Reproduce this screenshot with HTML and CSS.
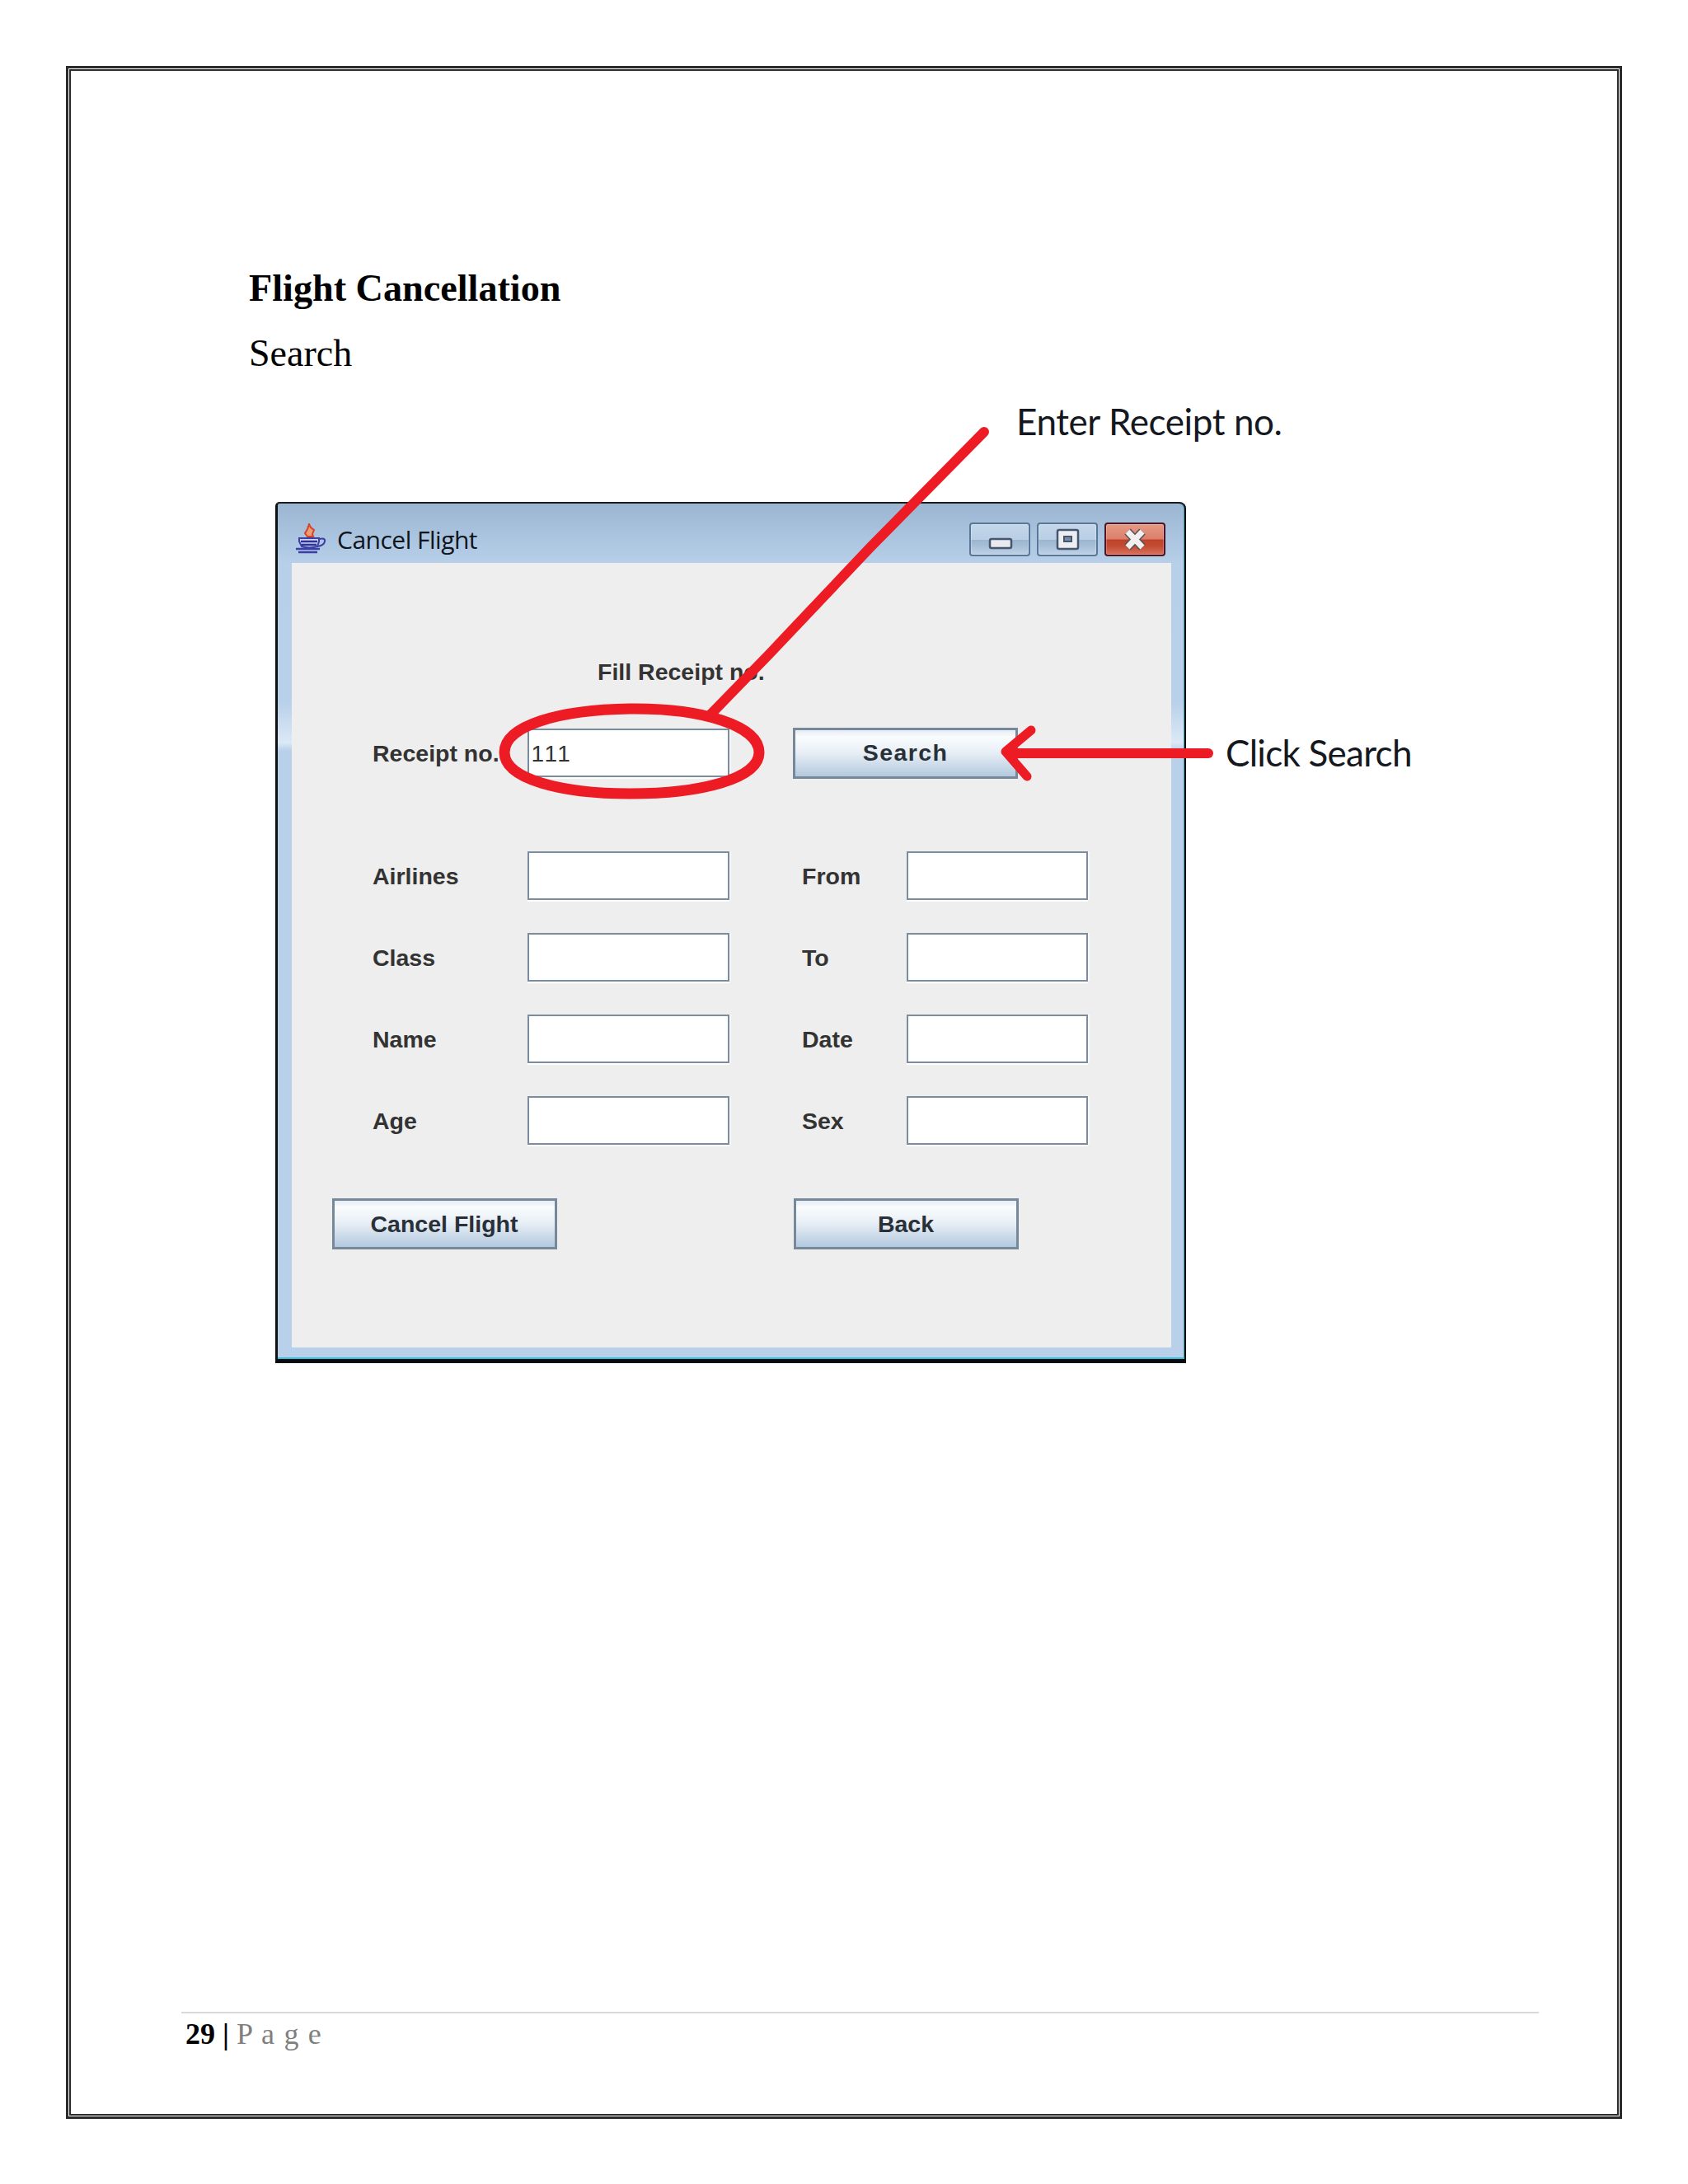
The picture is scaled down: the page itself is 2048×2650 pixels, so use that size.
FILE: index.html
```html
<!DOCTYPE html>
<html lang="en">
<head>
<meta charset="utf-8">
<title>Flight Cancellation</title>
<link rel="stylesheet" href="styles.css">
</head>
<body>
<div class="sheet">
  <main class="frame">
    <h1 class="title">Flight Cancellation</h1>
    <p class="subtitle">Search</p>
    <section class="window">
      <header class="titlebar">
        <svg class="java-icon" viewBox="0 0 38 37" aria-hidden="true">
          <path d="M17 1 L19 5 L23 8 L21 13 L22 16 L15 16 L12 12 L15 7 Z" fill="#e8a070" stroke="#d8412c" stroke-width="2"/>
          <path d="M5 18 H29 V22 L27 28 Q17 31 8 28 L5 22 Z" fill="#cfd6ee" stroke="#3b3fa6" stroke-width="2"/>
          <path d="M7 22 H27 M8 26 H26" stroke="#2e3296" stroke-width="2.5"/>
          <path d="M29 19 Q37 17 36 22 Q35 27 27 28" fill="none" stroke="#3b3fa6" stroke-width="2"/>
          <path d="M1 31 H30 M4 35 H27" stroke="#3b3fa6" stroke-width="2.5"/>
        </svg>
        <span class="window-title">Cancel Flight</span>
        <div class="controls">
          <div class="ctrl">
            <svg viewBox="0 0 74 41" aria-hidden="true"><rect x="25" y="20" width="26" height="11" rx="2" fill="#e9e9f0" stroke="#45566e" stroke-width="2.5"/></svg>
          </div>
          <div class="ctrl">
            <svg viewBox="0 0 74 41" aria-hidden="true"><rect x="25" y="9" width="25" height="23" rx="2" fill="#eceef2" stroke="#45566e" stroke-width="2.5"/><rect x="33" y="17" width="9" height="6" fill="#7b8ba6" stroke="#45566e" stroke-width="2"/></svg>
          </div>
          <div class="ctrl ctrl-close">
            <svg viewBox="0 0 74 41" aria-hidden="true"><path d="M28 11 L46 30 M46 11 L28 30" stroke="#54505a" stroke-width="10"/><path d="M28 11 L46 30 M46 11 L28 30" stroke="#f2f0ee" stroke-width="7"/></svg>
          </div>
        </div>
      </header>
      <div class="panel">
        <div class="fill-label jlabel">Fill Receipt no.</div>
        <div class="receipt-row">
          <label class="jlabel receipt-label">Receipt no.</label>
          <input class="jfield" type="text" value="111" readonly>
          <button class="jbutton search-btn" type="button">Search</button>
        </div>
        <div class="form-grid">
          <label class="jlabel">Airlines</label><input class="jfield" type="text" readonly>
          <label class="jlabel right-label">From</label><input class="jfield" type="text" readonly>
          <label class="jlabel">Class</label><input class="jfield" type="text" readonly>
          <label class="jlabel right-label">To</label><input class="jfield" type="text" readonly>
          <label class="jlabel">Name</label><input class="jfield" type="text" readonly>
          <label class="jlabel right-label">Date</label><input class="jfield" type="text" readonly>
          <label class="jlabel">Age</label><input class="jfield" type="text" readonly>
          <label class="jlabel right-label">Sex</label><input class="jfield" type="text" readonly>
        </div>
        <div class="actions">
          <button class="jbutton" type="button">Cancel Flight</button>
          <button class="jbutton" type="button">Back</button>
        </div>
      </div>
    </section>
    <footer class="page-footer">
      <b class="page-num">29</b> <b class="page-sep">|</b> <span class="page-word">P a g e</span>
    </footer>
  </main>

  <svg class="marks" viewBox="0 0 2048 2650" aria-hidden="true">
    <path d="M1194 524 L1056 664 L933 794 L862 867" class="mark mark-thin"/>
    <path d="M612 913 C612 880 680 861 765 860 C850 859 921 880 921 913 C921 945 850 963 765 963 C680 963 612 945 612 913 Z" class="mark mark-ring"/>
    <path d="M1466 914 H1225" class="mark mark-shaft"/>
    <path d="M1251 886 L1220 912 L1246 942" class="mark mark-head"/>
  </svg>
  <span class="callout callout-enter">Enter Receipt no.</span>
  <span class="callout callout-click">Click Search</span>
</div>
</body>
</html>
```
FILE: styles.css
```css
* { box-sizing: border-box; }
html, body { margin: 0; padding: 0; background: #fff; }
.sheet { position: relative; width: 2048px; height: 2650px; padding: 80px 80px 79px; }
.frame {
  display: flex; flex-direction: column; height: 100%;
  border: 3px solid #2b2b2b;
  box-shadow: inset 0 0 0 1px #fff, inset 0 0 0 3px #2b2b2b;
  padding: 240px 0 0 219px;
  font-family: "Liberation Serif", serif; color: #000;
}
.title { margin: 0; font-size: 46.2px; line-height: 54px; font-weight: 700; }
.subtitle { margin: 25px 0 0; font-size: 46px; line-height: 54px; font-weight: 400; }

.window {
  display: flex; flex-direction: column;
  width: 1105px; height: 1045px; margin: 153px 0 0 32px;
  padding: 0 17px 14px 17px;
  border-style: solid; border-color: #1c1c1c #0a0a0a #0a0a0a #111;
  border-width: 2px 2px 5px 3px;
  border-top-left-radius: 5px; border-top-right-radius: 8px;
  box-shadow: inset 0 -2px 0 #33c0e0, inset -1px 0 0 #3a9fc4;
  background: linear-gradient(#9bb6d2 0, #b7cfe9 72px, #b8d0e9 240px, #dce9f6 290px, #b8d0e9 300px);
}
.titlebar { display: flex; align-items: center; height: 72px; flex: none; margin-left: -11px; padding-top: 13px; }
.java-icon { width: 38px; height: 37px; flex: none; margin-left: 15px; }
.window-title {
  margin: 3px 0 0 13px; font-family: "Open Sans", sans-serif; font-size: 30px;
  letter-spacing: -0.5px; color: #10141c; line-height: 40px;
}
.controls { display: flex; gap: 8px; margin-left: auto; margin-right: 6px; margin-top: 2px; }
.ctrl {
  width: 74px; height: 41px; border: 2px solid #5b7797; border-radius: 4px;
  background: linear-gradient(#c4d7ea 0, #b9cfe5 50%, #9cb6cf 52%, #a6bed6 70%, #bed2e6 100%);
  box-shadow: inset 0 0 0 1px rgba(255,255,255,.25);
}
.ctrl svg { display: block; margin: -2px 0 0 -2px; width: 74px; height: 41px; }
.ctrl-close {
  border-color: #4e1526;
  background: linear-gradient(#e49a86 0, #dc7f6b 48%, #bf4329 52%, #c24c33 72%, #d9715c 100%);
}
.panel {
  flex: 1; background: #eee; padding: 114.5px 0 0 98px;
  width: 1067px;
  font-family: "Liberation Sans", sans-serif;
}
.jlabel { font-family: "Liberation Sans", sans-serif; font-size: 28.5px; font-weight: 700; line-height: 34px; color: #333; display: block; }
.fill-label { margin-left: 273px; }
.receipt-row { display: flex; align-items: center; margin-top: 52px; height: 60px; }
.receipt-label { width: 187.5px; flex: none; }
.jfield {
  display: block; width: 245px; height: 59px; padding: 2px 0 0 3px; margin: 0;
  border: 2px solid #7a8c9e; border-radius: 0; background: #fff; outline: 0;
  box-shadow: 0 2px 0 #fff, 2px 0 0 #f7f7f7;
  font-family: "Liberation Sans", sans-serif; font-size: 28px; letter-spacing: 2.4px; color: #333;
}
.jbutton {
  display: block; width: 273px; height: 62px; padding: 0; margin: 0;
  border: 3px solid #76889a; border-radius: 0;
  background: linear-gradient(#e4ecf4 0, #fafcfe 14%, #e6eef5 50%, #b3c9df 100%);
  font-family: "Liberation Sans", sans-serif; font-size: 28.5px; font-weight: 700; color: #2a3038;
}
.search-btn { margin-left: 77.5px; letter-spacing: 1.4px; }
.form-grid {
  display: grid; grid-template-columns: 187.5px 245px 88.5px 126.5px 220px;
  grid-auto-rows: 59px; row-gap: 40.33px; align-items: center; margin-top: 89px;
}
.form-grid .jlabel { padding-top: 1px; }
.right-label { grid-column: 4; }
.form-grid .jfield { width: 100%; }
.actions { display: flex; gap: 287px; margin: 65px 0 0 -49.5px; }

.page-footer {
  margin: auto 0 0 -82px; width: 1647px; height: 127px;
  border-top: 2px solid #d9d9d9; padding-left: 5px;
  font-size: 36px; line-height: 42px; padding-top: 4px;
}
.page-num, .page-sep { font-weight: 700; }
.page-word { color: #808080; letter-spacing: 1.2px; }

.marks { position: absolute; left: 0; top: 0; width: 2048px; height: 2650px; pointer-events: none; }
.mark { fill: none; stroke: #ed1c24; stroke-linecap: round; stroke-linejoin: round; }
.mark-thin { stroke-width: 12px; }
.mark-ring { stroke-width: 13px; }
.mark-shaft { stroke-width: 12px; }
.mark-head { stroke-width: 11px; }
.callout { position: absolute; font-family: "Lato", sans-serif; font-size: 44px; line-height: 50px; color: #15181e; white-space: nowrap; }
.callout-enter { left: 1233px; top: 486px; letter-spacing: -0.4px; }
.callout-click { left: 1487px; top: 888px; letter-spacing: -0.73px; }
```
